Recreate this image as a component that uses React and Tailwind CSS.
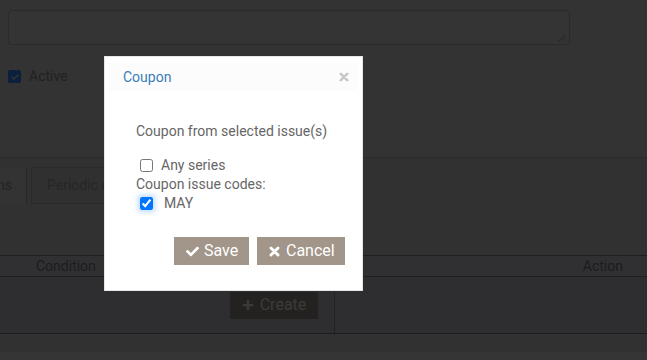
import { FaCheck, FaPlus } from 'react-icons/fa';

function Grip() {
  return (
    <svg className="absolute right-[2px] bottom-[2px]" width="9" height="9" viewBox="0 0 9 9">
      <path d="M1 8 L8 1 M4 8 L8 4" stroke="#1c1c1c" strokeWidth="1" strokeDasharray="1 1" />
    </svg>
  );
}

function BoldX({ size = 10, className = '' }) {
  return (
    <svg className={className} width={size} height={size} viewBox="0 0 10 10">
      <path d="M1.8 1.8 L8.2 8.2 M8.2 1.8 L1.8 8.2" stroke="currentColor" strokeWidth="2.6" strokeLinecap="round" />
    </svg>
  );
}

function CouponModal() {
  return (
    <div className="absolute left-[104px] top-[56px] w-[259px] h-[235px] bg-white border border-[#e6e6e6] text-[14px] text-[#666]">
      <div className="mx-[4px] mt-[6px] h-[28px] pl-[14px] pr-[9px] flex items-center justify-between bg-[#fcfcfc]">
        <span className="text-[#3a7cb8]">Coupon</span>
        <BoldX className="text-[#c8c8c8]" size={10} />
      </div>

      <div className="px-[31px] pt-[30px]">
        <div className="h-[20px] leading-[20px]">Coupon from selected issue(s)</div>

        <label className="mt-[15px] h-[18px] flex items-center leading-[18px]">
          <input type="checkbox" className="ml-[4px] w-[13px] h-[13px] m-0" />
          <span className="ml-[8px]">Any series</span>
        </label>
        <div className="h-[20px] leading-[20px]">Coupon issue codes:</div>
        <label className="h-[18px] flex items-center leading-[18px]">
          <input
            type="checkbox"
            defaultChecked
            className="ml-[4px] w-[13px] h-[13px] m-0 rounded-[2px] shadow-[0_0_5px_2px_rgba(0,117,255,0.25)]"
          />
          <span className="ml-[11px]">MAY</span>
        </label>
      </div>

      <div className="mt-[25px] pr-[17px] flex justify-end gap-[8px] text-[16px] text-white">
        <button className="h-[28px] w-[75px] pl-[12px] flex items-center gap-[5px] bg-[#a29589]">
          <FaCheck size={13} /> Save
        </button>
        <button className="h-[28px] w-[88px] pl-[12px] flex items-center gap-[6px] bg-[#a29589]">
          <BoldX size={11} /> Cancel
        </button>
      </div>
    </div>
  );
}

export default function App() {
  return (
    <div className="relative w-[647px] h-[360px] overflow-hidden bg-[#333333] font-['Roboto',sans-serif] text-[14px]">
      <div className="pl-[8px] pt-[10px]">
        <div className="relative w-[562px] h-[35px] rounded-[4px] border border-[#2a2a2a] bg-[#343434]">
          <Grip />
        </div>
      </div>

      <div className="mt-[25px] pl-[8px] h-[13px] flex items-center">
        <span className="w-[13px] h-[13px] rounded-[2px] bg-[#0c1f3d] flex items-center justify-center">
          <FaCheck className="text-[#333]" size={8} />
        </span>
        <span className="ml-[8px] text-[#222]">Active</span>
      </div>

      <div className="mt-[74px] border-t border-[#2b2b2b] bg-[#313131]">
        <div className="pt-[9px] flex items-stretch h-[46px]">
          <div className="w-[27px] border-r border-[#262626] flex items-center justify-end pr-[14px] text-[#222] bg-[#333333] overflow-hidden">
            ns
          </div>
          <div className="ml-[4px] w-[120px] border border-[#2a2a2a] bg-[#303030] flex items-center pl-[15px] text-[#262626]">
            Periodic coupon
          </div>
        </div>

        <div className="mt-[51px] border-t border-b border-[#1e1e24] bg-[#303033] h-[22px] flex items-center text-[#1c1c1c]">
          <div className="w-[335px] pl-[36px]">Condition</div>
          <div className="flex-1 text-right pr-[24px]">Action</div>
        </div>
        <div className="h-[57px] bg-[#2e2e30] border-b border-[#1c1c22] flex">
          <div className="w-[335px] flex items-center justify-end pr-[16px] border-r border-dotted border-[#151515]">
            <button className="h-[27px] w-[88px] flex items-center justify-center gap-[6px] bg-[#242220] text-[#3d3b39] text-[16px]">
              <FaPlus size={12} /> Create
            </button>
          </div>
          <div className="flex-1" />
        </div>
        <div className="h-[18px] bg-[#313131]" />
        <div className="h-[20px] bg-[#353535]" />
      </div>

      <CouponModal />
    </div>
  );
}
